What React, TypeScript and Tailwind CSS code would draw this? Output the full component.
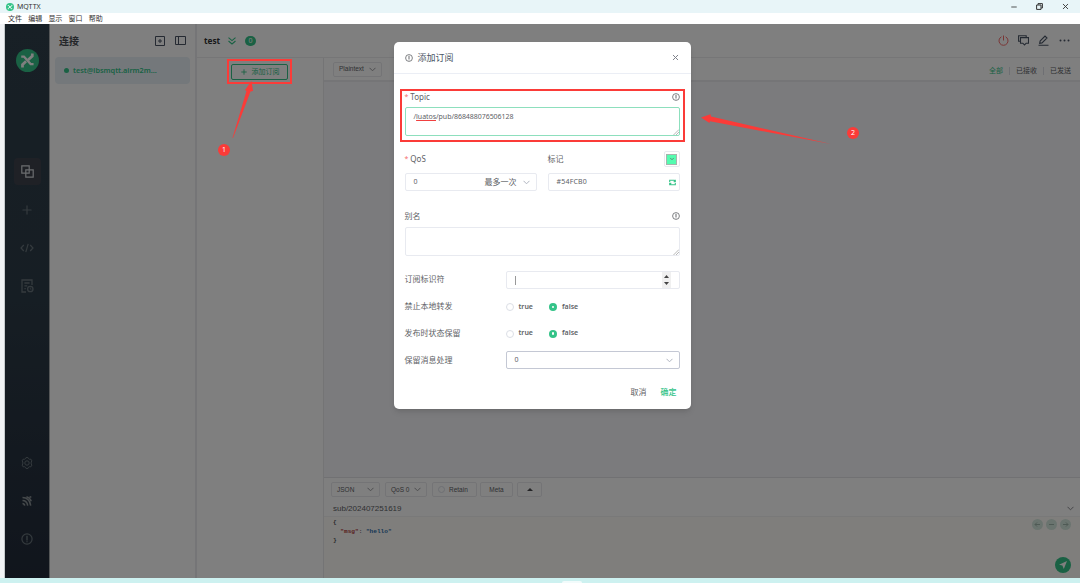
import React, { useState } from 'react';
import { ChevronDown, Minus, Plus, X } from 'lucide-react';

const InfoIcon = ({ size = 8, className = '' }: { size?: number; className?: string }) => (
  <svg width={size} height={size} viewBox="0 0 16 16" fill="none" stroke="currentColor" strokeWidth="1.6" className={className}>
    <circle cx="8" cy="8" r="6.8" />
    <path d="M8 3.8v6.2M8 11v1.4" strokeWidth="1.9" />
  </svg>
);

const Chevron = ({ className = '' }: { className?: string }) => (
  <svg width="7" height="5" viewBox="0 0 7 5" fill="none" stroke="currentColor" strokeWidth="1" className={`shrink-0 ${className}`}>
    <path d="M0.500 0.800l3 3 3-3" />
  </svg>
);

const Resizer = () => (
  <svg width="6" height="6" viewBox="0 0 6 6" stroke="#999" strokeWidth="0.7" className="absolute right-0 bottom-0">
    <path d="M0.5 6L6 0.5M3 6l3-3" />
  </svg>
);

const Sidebar = () => (
  <aside className="w-[45px] shrink-0 flex flex-col items-center bg-linear-to-b from-[#30404c] via-[#2d3c48] to-[#222b3a] text-[#69757c] border-r border-[#a8acae]">
    <svg width="23" height="23" viewBox="0 0 22 22" className="mt-[25px] shrink-0">
      <circle cx="11" cy="11" r="11" fill="#34c388" />
      <g stroke="#fff" fill="none">
        <path d="M5 7.200h2.600l6.400 7.200h2.800" strokeWidth="2.200" />
        <path d="M15.600 4.200v2.600L11.500 10.600M9.600 11.800L6.200 15v2.600" strokeWidth="2.600" />
      </g>
    </svg>
    <div className="mt-[86px] w-[27px] h-[27px] shrink-0 rounded-[4px] bg-[#3f424d] flex items-center justify-center text-[#d6dade]">
      <svg width="13" height="13" viewBox="0 0 13 13" fill="none" stroke="currentColor" strokeWidth="1.2">
        <path d="M0.8 0.8h7.4v7.4H0.8zM4.8 4.8h7.4v7.4H4.8z" />
      </svg>
    </div>
    <Plus size={14} strokeWidth={2} className="mt-[18px] shrink-0" />
    <svg width="14" height="10" viewBox="0 0 14 10" fill="none" stroke="currentColor" strokeWidth="1.2" className="mt-[26px] shrink-0">
      <path d="M3.8 2L1 5l2.800 3M10.200 2L13 5l-2.800 3M8.200 0.800L5.800 9.200" />
    </svg>
    <svg width="13" height="14" viewBox="0 0 13 14" fill="none" stroke="currentColor" strokeWidth="1.3" className="mt-[26px] shrink-0">
      <path d="M5 13H1V1h10v5M3.400 4h5.200M3.400 6.800h2.800M3.400 9.600h1.400" />
      <circle cx="9.300" cy="10" r="2.700" />
      <path d="M9.300 8.600v1.600h1.200" strokeWidth="0.8" />
    </svg>
    <svg width="12" height="12" viewBox="0 0 12 12" fill="none" stroke="currentColor" className="mt-[164px] shrink-0">
      <path d="M4.400 1.700L5 0.600h2l0.600 1.100 1 0.600 1.300-0.100 1 1.700-0.700 1.100v2l0.700 1.100-1 1.700-1.300-0.100-1 0.600L7 11.400H5l-0.600-1.100-1-0.600-1.300 0.100-1-1.700L1.800 7V5L1.100 3.900l1-1.700 1.300 0.100z" />
      <circle cx="6" cy="6" r="2.200" />
    </svg>
    <svg width="10" height="10" viewBox="0 0 10 10" fill="none" stroke="currentColor" strokeWidth="1.500" className="mt-[27px] shrink-0 text-[#8b9397]">
      <path d="M0.500 1.400c4.300 0 7.600 3.200 8.200 8.200M0.500 4.400c2.800 0 4.800 2.100 5.200 5.200M0.500 7.400c1.200 0 2 0.900 2.200 2.200M4.500 0.800c2 0.500 3.800 2.200 4.800 4.400M7.500 1.200l1.800-0.500" />
    </svg>
    <InfoIcon size={12} className="mt-[27px] shrink-0" />
  </aside>
);

const Connections = () => (
  <section className="w-[147px] shrink-0 bg-white border-r-2 border-[#ebebee]">
    <div className="h-[33px] flex items-center pl-[9px] pr-[9px] text-[#4a5565]">
      <h1 className="grow pt-px text-[10px] font-bold text-[#4b4f55]">连接</h1>
      <svg width="10" height="10" viewBox="0 0 10 10" fill="none" stroke="currentColor" className="mr-[10px]">
        <path d="M0.500 0.500h9v9h-9zM5 3v4M3 5h4" />
      </svg>
      <svg width="11" height="9" viewBox="0 0 11 9" fill="none" stroke="currentColor">
        <path d="M0.500 0.500h10v8H0.500zM3.500 0.500v8" />
      </svg>
    </div>
    <div className="ml-[5px] w-[135px] h-[27px] rounded-[4px] bg-[#e8f1f7] flex items-center pl-[9px] text-[7.300px] font-semibold text-[#34c388] whitespace-nowrap">
      <span className="w-[5px] h-[5px] rounded-full bg-[#34c388] mr-1" />
      test@lbsmqtt.airm2m...
    </div>
  </section>
);

const Select = ({ label, className }: { label: string; className: string }) => (
  <div className={`h-[15px] border border-[#e9e9ed] rounded-[2px] flex items-center justify-between px-[5px] ${className}`}>
    {label}
    <Chevron className="text-[#9a9a9f]" />
  </div>
);

const NavDot = ({ d }: { d: string }) => (
  <span className="w-[11px] h-[11px] rounded-full bg-[#d5e8df] flex items-center justify-center">
    <svg width="7" height="7" viewBox="0 0 7 7" fill="none" stroke="#9fb5aa" strokeWidth="1"><path d={d} /></svg>
  </span>
);

const Composer = () => (
  <footer className="h-[101px] shrink-0 flex flex-col border-t border-[#e3e3e6] bg-white font-[Liberation_Sans,Noto_Sans_CJK_SC,sans-serif] text-[6.500px] text-[#606266]">
    <div className="mt-[4px] pl-[7px] flex items-center">
      <Select label="JSON" className="w-[49px]" />
      <Select label="QoS 0" className="w-[42px] ml-[5px]" />
      <div className="ml-[5px] w-[45px] h-[15px] border border-[#e9e9ed] rounded-[2px] flex items-center pl-[5px]">
        <span className="w-[7px] h-[7px] rounded-full border border-[#dcdfe6] mr-[4px]" />Retain
      </div>
      <div className="ml-[3px] w-[33px] h-[15px] border border-[#e9e9ed] rounded-[2px] flex items-center justify-center">Meta</div>
      <div className="ml-1 w-[25px] h-[15px] border border-[#e9e9ed] rounded-[2px] flex items-center justify-center">
        <svg width="6" height="3" viewBox="0 0 6 3" fill="#4a4a4f"><path d="M3 0l3 3H0z" /></svg>
      </div>
    </div>
    <div className="h-5 pt-[4px] pl-[9px] pr-[6px] flex items-center justify-between text-[8px] border-b border-[#f3f3f3]">
      sub/202407251619
      <Chevron className="text-[#8a8a8f]" />
    </div>
    <div className="grow bg-[#fffdf8] flex justify-between">
      <pre className="pt-px pl-[9px] font-[Liberation_Mono,monospace] font-bold text-[6.100px] leading-[9px] text-[#55555a]">
        {'{\n  '}<span className="text-[#b04040]">"msg"</span>{': '}<span className="text-[#2c6cac]">"hello"</span>{'\n}'}
      </pre>
      <div className="flex flex-col items-end justify-between pr-[9px] pt-[2px] pb-[5px]">
        <div className="flex gap-[3px]">
          <NavDot d="M6 3.500H1M3 1.500l-2 2 2 2" />
          <NavDot d="M1 3.500h5" />
          <NavDot d="M1 3.500h5M4 1.500l2 2-2 2" />
        </div>
        <span className="w-4 h-4 rounded-full bg-[#34c388] flex items-center justify-center">
          <svg width="8" height="8" viewBox="0 0 8 8" fill="#fff"><path d="M8 0L0 3.800l3.400 0.800L4.800 8z" /></svg>
        </span>
      </div>
    </div>
  </footer>
);

const Workspace = () => (
  <main className="grow flex flex-col bg-white">
    <header className="h-[34px] shrink-0 flex items-center border-b border-[#ececee] pl-[7px] pr-[10px] text-[#4a5565]">
      <b className="pt-[2px] text-[8.200px] text-[#303133]">test</b>
      <svg width="8" height="8" viewBox="0 0 8 8" fill="none" stroke="#34c388" strokeWidth="1.100" className="ml-[8px] mt-px">
        <path d="M0.500 0.600L4 3.600l3.500-3M0.500 4L4 7l3.500-3" />
      </svg>
      <span className="ml-[9px] w-[11px] h-[10px] rounded-full bg-[#34c388] text-white text-[7px] leading-none flex items-center justify-center">0</span>
      <div className="ml-auto flex items-center">
        <svg width="11" height="11" viewBox="0 0 11 11" fill="none" stroke="#f56c6c" strokeWidth="1">
          <path d="M3.400 1.800a4.500 4.500 0 1 0 4.200 0M5.500 0.500v5" />
        </svg>
        <svg width="11" height="11" viewBox="0 0 11 11" fill="none" stroke="currentColor" strokeWidth="1.100" className="ml-[9px]">
          <path d="M2.500 2.600h8v5.600H8.200L6.500 10 4.800 8.200H2.500zM2.200 6.200H0.600V0.700h7.600v1.600" />
        </svg>
        <svg width="11" height="11" viewBox="0 0 11 11" fill="none" stroke="currentColor" strokeWidth="1.100" className="ml-[9px]">
          <path d="M0.500 10.200h10M1.700 8.300l0.400-2.300L7 1l2 2-5 4.900z" />
        </svg>
        <svg width="11" height="3" viewBox="0 0 11 3" fill="currentColor" className="ml-[10px]">
          <circle cx="1.500" cy="1.500" r="1" /><circle cx="5.500" cy="1.500" r="1" /><circle cx="9.500" cy="1.500" r="1" />
        </svg>
      </div>
    </header>
    <div className="grow flex min-h-0">
      <div className="w-[127px] shrink-0 border-r border-[#e8e8ea]">
        <button className="mt-[6px] ml-[34px] w-[57px] h-4 border border-[#34c388] rounded-[2px] flex items-center justify-center text-[7px] text-[#34c388] whitespace-nowrap">
          <Plus size={8} strokeWidth={2.600} className="mr-[4px]" />添加订阅
        </button>
      </div>
      <div className="grow flex flex-col">
        <div className="h-[24px] shrink-0 flex items-center border-b-2 border-[#ebebee] pl-[9px] pr-[9px] text-[7px] text-[#606266]">
          <Select label="Plaintext" className="w-[49px] text-[6.500px] font-[Liberation_Sans,sans-serif]" />
          <div className="ml-auto pt-[4px] flex items-center">
            <span className="text-[#34c388]">全部</span>
            <span className="mx-[6px] w-px h-2 bg-[#dcdfe6]" />
            <span>已接收</span>
            <span className="mx-[6px] w-px h-2 bg-[#dcdfe6]" />
            <span>已发送</span>
          </div>
        </div>
        <div className="grow bg-[#f7f7fa]" />
        <Composer />
      </div>
    </div>
  </main>
);

const RadioRow = ({ label }: { label: string }) => {
  const [value, setValue] = useState(false);
  return (
    <div className="h-[18px] flex items-center">
      <span className="w-[101px] pb-px">{label}</span>
      {[true, false].map((option) => (
        <button key={String(option)} onClick={() => setValue(option)} className="w-[43.500px] flex items-center text-[7px] font-semibold">
          <span className={`w-2 h-2 rounded-full mr-[5px] flex items-center justify-center ${value === option ? 'bg-[#34c388]' : 'border border-[#dcdfe6]'}`}>
            {value === option && <span className="w-[2.500px] h-[2.500px] rounded-full bg-white" />}
          </span>
          {String(option)}
        </button>
      ))}
    </div>
  );
};

const SubscribeDialog = () => (
  <div className="w-[297px] h-[367px] mt-[18px] mr-px rounded-[5px] bg-white shadow-md text-[8px] text-[#606266] whitespace-nowrap">
    <div className="h-8 border-b border-[#ebeef5] flex items-center pl-[11px] pr-[12px]">
      <InfoIcon />
      <span className="grow ml-[5px] text-[9px] text-[#4a5565]">添加订阅</span>
      <X size={9} strokeWidth={2.600} className="text-[#7c8088] -mr-px" />
    </div>
    <div className="px-[11px] pt-4">
      <div className="h-[14px] flex items-center">
        <span className="text-[#f56c6c] mr-[2px] text-[7px]">*</span>Topic
        <InfoIcon className="ml-auto" />
      </div>
      <div className="mt-[3px] h-[29px] relative border border-[#8ddfbd] rounded-[2px] pl-2 pt-[4px] text-[7px] leading-[10px] tracking-[-0.040px]">
        /<span className="underline decoration-[#f04040] decoration-[0.800px] underline-offset-1">luatos</span>/pub/868488076506128
        <Resizer />
      </div>
      <div className="mt-[15px] flex gap-[11px]">
        <div className="w-[132px]">
          <div className="h-4 flex items-center">
            <span className="text-[#f56c6c] mr-[2px] text-[7px]">*</span>QoS
          </div>
          <div className="mt-[6px] h-[18px] border border-[#e8eaf0] rounded-[2px] flex items-center pl-2 pr-[6px] text-[7px]">
            0
            <span className="ml-auto mr-[6px] text-[8px]">最多一次</span>
            <Chevron className="text-[#b0b5c0]" />
          </div>
        </div>
        <div className="grow">
          <div className="h-4 flex items-center justify-between">
            标记
            <span className="w-4 h-4 border border-[#e8eaf0] rounded-[2px] flex items-center justify-center">
              <span className="w-[11px] h-[11px] border border-[#a5b5ad] bg-[#54fcb0] flex items-center justify-center">
                <ChevronDown size={6} strokeWidth={3} className="text-[#606266]" />
              </span>
            </span>
          </div>
          <div className="mt-[6px] h-[18px] border border-[#e8eaf0] rounded-[2px] flex items-center justify-between pl-2 pr-[3px] text-[7px] tracking-[0.200px]">
            #54FCB0
            <svg width="7" height="7" viewBox="0 0 7 7" fill="none" stroke="#34c388" strokeWidth="1.100">
              <path d="M0.700 3V1.300h4.500l1 1.200M6.300 4v1.700H1.800l-1-1.200M6.300 0.800v1.900H4.600M0.700 6.200V4.300h1.700" />
            </svg>
          </div>
        </div>
      </div>
      <div className="mt-[18px] h-[14px] flex items-center justify-between">
        别名
        <InfoIcon />
      </div>
      <div className="mt-1 h-[29px] relative border border-[#e8eaf0] rounded-[2px]"><Resizer /></div>
      <div className="mt-[15px] flex flex-col gap-[8.800px]">
        <div className="h-[18px] flex items-center">
          <span className="w-[101px] pb-[2px]">订阅标识符</span>
          <div className="grow h-full border border-[#e8eaf0] rounded-[2px] flex items-center justify-between pl-2 pr-2">
            <span className="w-px h-[9px] bg-[#999]" />
            <span className="w-[9px] h-full bg-[#f0f0f0] flex flex-col items-center justify-center gap-[4px]">
              <svg width="5" height="3" viewBox="0 0 5 3" fill="#444"><path d="M2.500 0L5 3H0z" /></svg>
              <svg width="5" height="3" viewBox="0 0 5 3" fill="#444"><path d="M2.500 3L0 0h5z" /></svg>
            </span>
          </div>
        </div>
        <RadioRow label="禁止本地转发" />
        <RadioRow label="发布时状态保留" />
        <div className="h-[18px] flex items-center">
          <span className="w-[101px]">保留消息处理</span>
          <div className="grow h-full border border-[#c4c8d4] rounded-[2px] flex items-center justify-between pl-2 pr-[6px] text-[7px]">
            0
            <Chevron className="text-[#b0b5c0]" />
          </div>
        </div>
      </div>
      <div className="mt-[16px] pr-[3px] flex justify-end gap-[14px] leading-[13px]">
        <span>取消</span>
        <span className="font-medium text-[#34c388]">确定</span>
      </div>
    </div>
  </div>
);

// Numbered red callouts drawn over the window
const Callouts = () => (
  <>
    <div className="absolute left-[227px] top-[59px] w-[65px] h-[25px] border-2 border-[#fb3b38]" />
    <div className="absolute left-[400px] top-[89px] w-[285px] h-[53px] border-2 border-[#fb3b38]" />
    <svg width="24" height="60" viewBox="0 0 24 60" fill="#fb3b38" className="absolute left-[231px] top-[80px]">
      <path d="M1.500 58L15.500 11l-1.500-1L20.500 1l1.500 10-2.500 0.500L2 58z" />
    </svg>
    <svg width="140" height="34" viewBox="0 0 140 34" fill="#fb3b38" className="absolute left-[700px] top-[113px]">
      <path d="M1 4.500L10.500 1.200 11 3.500 131 31 10 8.300 9.500 10z" />
    </svg>
    <span className="absolute left-[218px] top-[144px] w-3 h-3 rounded-full bg-[#fb3b38] text-white text-[7px] flex items-center justify-center">1</span>
    <span className="absolute left-[847px] top-[127px] w-3 h-3 rounded-full bg-[#fb3b38] text-white text-[7px] flex items-center justify-center">2</span>
  </>
);

const App = () => (
  <div className="relative w-[1080px] h-[583px] overflow-hidden flex flex-col bg-[#cdf1f0] font-[Noto_Sans,Noto_Sans_CJK_SC,sans-serif]">
    <div className="h-[13px] shrink-0 bg-[#e8f5f8] flex items-center pl-[6px] pr-[10px] text-[7px] text-[#333]">
      <svg width="8" height="8" viewBox="0 0 8 8">
        <circle cx="4" cy="4" r="4" fill="#34c388" />
        <path d="M1.800 2.500h0.900l2.500 3.200h1M6 1.800v0.800L2.200 5.400v0.900" stroke="#fff" strokeWidth="0.900" fill="none" />
      </svg>
      <span className="ml-[3px] pt-[2px] grow">MQTTX</span>
      <Minus size={8} strokeWidth={2.500} />
      <svg width="7" height="7" viewBox="0 0 7 7" fill="none" stroke="currentColor" strokeWidth="1" className="ml-[18px] mr-[18px]">
        <path d="M0.600 2h4.400v4.400H0.600zM2 1.800V0.600h4.400V5H5.200" />
      </svg>
      <X size={9} strokeWidth={2.400} />
    </div>
    <nav className="h-[11px] shrink-0 bg-white flex items-center gap-[6.200px] pt-[2px] pl-2 text-[7px] text-[#333]">
      {['文件', '编辑', '显示', '窗口', '帮助'].map((item) => <span key={item}>{item}</span>)}
    </nav>
    <div className="h-[554px] shrink-0 flex">
      <div className="w-[5px] shrink-0 bg-[#f1f3f5] border-r border-[#c5cacc]" />
      <div className="relative grow flex">
        <Sidebar />
        <Connections />
        <Workspace />
        <div className="absolute inset-0 bg-black/50 flex items-start justify-center">
          <SubscribeDialog />
        </div>
      </div>
    </div>
    <div className="h-[5px] flex items-end">
      <span className="ml-[562px] w-5 h-[2px] rounded-t-sm bg-[#f2fbfb]" />
    </div>
    <Callouts />
  </div>
);

export default App;
